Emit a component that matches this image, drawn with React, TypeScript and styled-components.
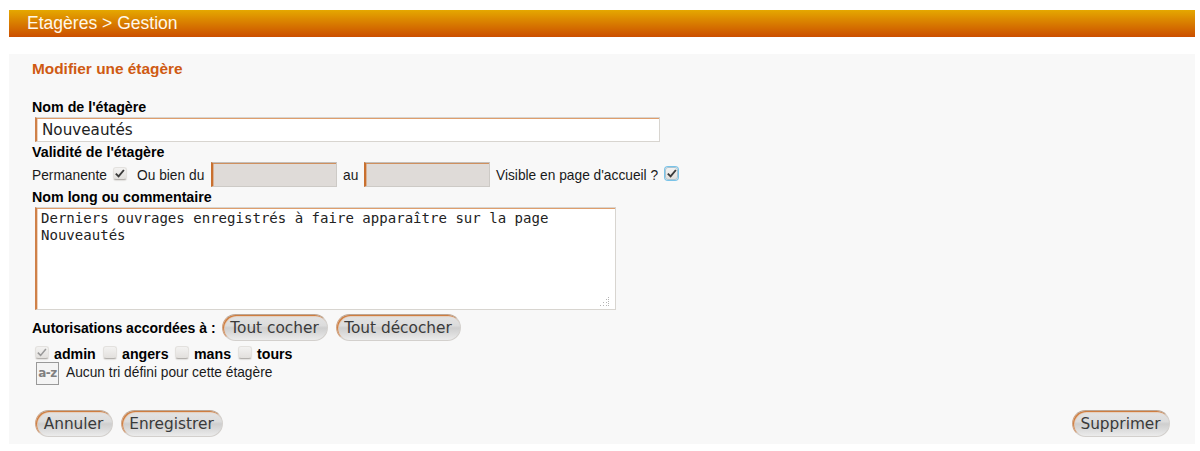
import React from 'react';
import styled, { createGlobalStyle, css } from 'styled-components';

const GlobalStyle = createGlobalStyle`
  * { box-sizing: border-box; }
  body {
    margin: 0;
    background: #fff;
    color: #1a1a1a;
    font: 13.75px/20px "Liberation Sans", Arial, sans-serif;
  }
`;

const Page = styled.div`
  padding: 10px 5px 0 9px;
  height: 451px;
  overflow: hidden;
`;

const Banner = styled.h1`
  margin: 0 0 17px;
  padding-left: 18px;
  height: 27px;
  font-size: 17.55px;
  font-weight: 400;
  line-height: 26px;
  color: #fff8ea;
  background: linear-gradient(#e5a800, #cb4e00);
`;

const Panel = styled.form`
  height: 390px;
  padding: 4px 25px 0 23px;
  background: #f8f8f8;
`;

const Title = styled.h3`
  margin: 0 0 19px;
  height: 20px;
  padding-top: 1px;
  font-size: 15.4px;
  line-height: 20px;
  color: #cf5a12;
`;

const Label = styled.label`
  display: block;
  height: 20px;
  font-weight: 700;
  font-size: 14.25px;
  color: #000;
`;

const field = css`
  display: block;
  margin: 0 0 0 3px;
  border: 1px solid #d8d5d0;
  border-left: 2px solid #cf8149;
  border-radius: 0;
  box-shadow: inset 0 1px 0 #df9e6d, inset 1px 0 0 #f0d3bd;
  outline: none;
  resize: none;
  color: #222;
`;

const NameInput = styled.input`
  ${field}
  width: 625px;
  height: 25px;
  padding: 0 5px;
  font: 15.2px/20px "DejaVu Sans", sans-serif;
`;

const DateInput = styled.input`
  ${field}
  width: 126px;
  height: 25px;
  margin-left: 0;
  background: #dfdbd8;
  border-color: #c4bfba #cdcac6 #cdcac6 #c9702f;
  box-shadow: inset 0 1px 0 #cf905f, inset 1px 0 0 #d9b296;
`;

const CommentFrame = styled.div`
  position: relative;
  width: 584px;
  height: 103px;
`;

const Comment = styled.textarea`
  ${field}
  width: 581px;
  height: 103px;
  padding: 2px 4px 0;
  overflow: hidden;
  font: 14.05px/17px "DejaVu Sans Mono", monospace;
`;

const Grip = styled.svg`
  position: absolute;
  right: 7px;
  bottom: 4px;
`;

const Row = styled.div<{ $height: number; $top?: number; $align?: string }>`
  display: flex;
  align-items: ${p => p.$align ?? 'center'};
  height: ${p => p.$height}px;
  margin-top: ${p => p.$top ?? 0}px;
`;

const GroupRow = styled(Row)`
  padding: 4px 0 0 3px;
`;

const Actions = styled(Row)`
  padding-left: 3px;
`;

const Text = styled.span<{ $width?: number; $bold?: boolean; $indent?: number; $tight?: boolean }>`
  flex: none;
  white-space: nowrap;
  padding-top: 1px;
  padding-left: ${p => p.$indent ?? 0}px;
  width: ${p => (p.$width ? `${p.$width}px` : 'auto')};
  ${p => p.$bold && css`font-weight: 700; font-size: 14.2px; color: #000;`}
  ${p => p.$tight && css`font-size: 14px;`}
`;

const DateText = styled(Text)`
  padding-top: 2px;
`;

const Box = styled.span<{ $focus?: boolean }>`
  flex: none;
  display: block;
  width: 14px;
  height: 13px;
  margin: 0 5px 2px 0;
  border: 1px solid #e3e1de;
  border-bottom-color: #b4b1ae;
  border-radius: 3px;
  background: linear-gradient(#f3f2f1, #e2e0dd);
  box-shadow: 0 1px 1px #e2e0de;
  ${p => p.$focus && css`
    width: 13px;
    border-color: #a9c4d2;
    box-shadow: 0 0 0 1px #79c3e8;
  `}
  svg { display: block; overflow: visible; }
`;

const PillButton = styled.button<{ $width: number }>`
  flex: none;
  width: ${p => p.$width}px;
  height: 27px;
  margin: 0 8px 0 0;
  padding: 1px 1px 0 0;
  border: 1px solid #d3d0cd;
  border-top-color: #bda795;
  border-left-color: #d0a382;
  border-radius: 14px;
  background: linear-gradient(#e4e4e4 0%, #dcdcdc 42%, #cecece 52%, #ebebeb 100%);
  box-shadow: inset 1px 1px 0 #cf7d3f, inset 1.5px 1.5px 1px #e6bd9d;
  font: 15.35px/22px "DejaVu Sans", sans-serif;
  color: #3a3a3a;
  white-space: nowrap;
  &:last-child { margin-right: 0; }
`;

const SortIcon = styled.span`
  flex: none;
  width: 23px;
  height: 23px;
  margin: 0 7px 0 4px;
  border: 1px solid #999;
  background: #f4f4f4;
  color: #808080;
  font: 700 12px/20px "DejaVu Sans", sans-serif;
  text-align: center;
  letter-spacing: -0.5px;
  white-space: nowrap;
`;

const Spacer = styled.span`
  flex: 1;
`;

function Check({ checked, muted, focus }: { checked?: boolean; muted?: boolean; focus?: boolean }) {
  return (
    <Box $focus={focus} role="checkbox" aria-checked={!!checked}>
      {checked && (
        <svg width="12" height="12" viewBox="0 0 12 12" fill="none">
          <path d="M1.8 5.6 4.6 8.4 9.9 2" stroke={muted ? '#999' : '#3a3a3a'} strokeWidth={muted ? 1.5 : 1.9} />
        </svg>
      )}
    </Box>
  );
}

const groups = [
  { name: 'admin', width: 49, checked: true },
  { name: 'angers', width: 53, checked: false },
  { name: 'mans', width: 44, checked: false },
  { name: 'tours', width: 40, checked: false },
];

export default function App() {
  return (
    <>
      <GlobalStyle />
      <Page>
        <Banner>Etagères &gt; Gestion</Banner>
        <Panel>
          <Title>Modifier une étagère</Title>
          <Label>Nom de l'étagère</Label>
          <NameInput defaultValue="Nouveautés" />
          <Label>Validité de l'étagère</Label>
          <Row $height={25}>
            <DateText $width={81}>Permanente</DateText>
            <Check checked />
            <DateText $width={79} $indent={5}>Ou bien du</DateText>
            <DateInput disabled />
            <DateText $width={27} $indent={6}>au</DateText>
            <DateInput disabled />
            <DateText $width={175} $indent={6}>Visible en page d'accueil ?</DateText>
            <Check checked focus />
          </Row>
          <Label>Nom long ou commentaire</Label>
          <CommentFrame>
            <Comment defaultValue={'Derniers ouvrages enregistrés à faire apparaître sur la page\nNouveautés'} />
            <Grip width="9" height="9" viewBox="0 0 9 9" fill="#b5b5b5">
              {[[8, 0], [8, 2], [6, 2], [8, 4], [6, 5], [3, 5], [8, 6], [8, 8], [6, 8], [3, 8], [0, 8]].map(([x, y]) => (
                <rect key={`${x}-${y}`} x={x} y={y} width="1" height="1" />
              ))}
            </Grip>
          </CommentFrame>
          <Row $height={27} $top={4}>
            <Text $bold $tight $width={190}>Autorisations accordées à :</Text>
            <PillButton type="button" $width={106}>Tout cocher</PillButton>
            <PillButton type="button" $width={125}>Tout décocher</PillButton>
          </Row>
          <GroupRow $height={21}>
            {groups.map(g => (
              <React.Fragment key={g.name}>
                <Check checked={g.checked} muted />
                <Text $bold $width={g.width}>{g.name}</Text>
              </React.Fragment>
            ))}
          </GroupRow>
          <Row $height={23} $align="flex-start">
            <SortIcon>a-z</SortIcon>
            <Text>Aucun tri défini pour cette étagère</Text>
          </Row>
          <Actions $height={27} $top={25}>
            <PillButton type="button" $width={78}>Annuler</PillButton>
            <PillButton type="button" $width={102}>Enregistrer</PillButton>
            <Spacer />
            <PillButton type="button" $width={98}>Supprimer</PillButton>
          </Actions>
        </Panel>
      </Page>
    </>
  );
}
